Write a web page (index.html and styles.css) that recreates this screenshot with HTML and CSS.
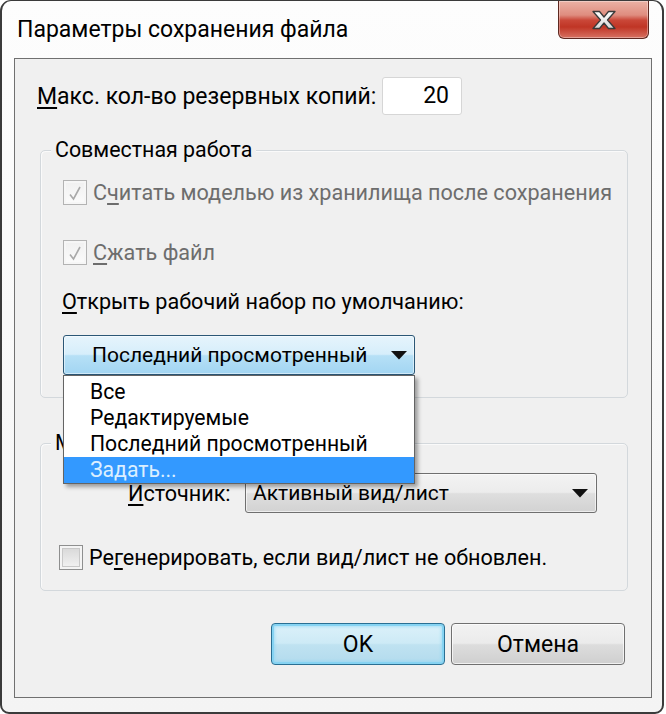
FILE: index.html
```html
<!DOCTYPE html>
<html lang="ru">
<head>
<meta charset="utf-8">
<title>Параметры сохранения файла</title>
<link rel="stylesheet" href="styles.css">
</head>
<body>
<div class="window">
  <div class="titlebar">
    <span class="title">Параметры сохранения файла</span>
    <div class="close">
      <svg width="26" height="20" viewBox="0 0 26 20">
        <defs>
          <linearGradient id="xg" x1="0" y1="0" x2="0" y2="1">
            <stop offset="0" stop-color="#ffffff"/>
            <stop offset="1" stop-color="#d8d8d8"/>
          </linearGradient>
        </defs>
        <polygon points="2,1.5 8.5,1.5 13,7 17.5,1.5 24,1.5 16.5,10 24,18.5 17.5,18.5 13,13 8.5,18.5 2,18.5 9.5,10" fill="url(#xg)" stroke="#3a3a3a" stroke-width="1.3" stroke-linejoin="round"/>
      </svg>
    </div>
  </div>
  <div class="client">
    <div class="row-backups">
      <span class="backups-label"><u>М</u>акс. кол-во резервных копий:</span>
      <div class="textbox">20</div>
    </div>

    <div class="group group-collab">
      <div class="legend">Совместная работа</div>
      <div class="check disabled cb-first">
        <span class="box">
          <svg width="14" height="16" viewBox="0 0 14 16"><path d="M2 9.5 L5.5 14 L12 2" fill="none" stroke="#a9a9a9" stroke-width="1.6"/></svg>
        </span>
        <span class="check-text">С<u>ч</u>итать моделью из хранилища после сохранения</span>
      </div>
      <div class="check disabled cb-second">
        <span class="box">
          <svg width="14" height="16" viewBox="0 0 14 16"><path d="M2 9.5 L5.5 14 L12 2" fill="none" stroke="#a9a9a9" stroke-width="1.6"/></svg>
        </span>
        <span class="check-text"><u>С</u>жать файл</span>
      </div>
      <div class="open-label"><u>О</u>ткрыть рабочий набор по умолчанию:</div>
      <div class="combo-wrap">
        <div class="combo combo-open">
          <span>Последний просмотренный</span>
          <svg class="arrow" width="18" height="10" viewBox="0 0 18 10"><polygon points="1,1 17,1 9,9.5" fill="#111"/></svg>
        </div>
        <ul class="dropdown">
          <li>Все</li>
          <li>Редактируемые</li>
          <li>Последний просмотренный</li>
          <li class="selected">Задать...</li>
        </ul>
      </div>
    </div>

    <div class="group group-thumb">
      <div class="legend">Миниатюра</div>
      <div class="source-row">
        <span class="source-label"><u>И</u>сточник:</span>
        <div class="combo combo-gray">
          <span>Активный вид/лист</span>
          <svg class="arrow" width="18" height="10" viewBox="0 0 18 10"><polygon points="1,1 17,1 9,9.5" fill="#111"/></svg>
        </div>
      </div>
      <div class="check cb-third">
        <span class="box box-empty"></span>
        <span class="check-text">Ре<u>г</u>енерировать, если вид/лист не обновлен.</span>
      </div>
    </div>

    <div class="buttons">
      <button class="btn btn-default">OK</button>
      <button class="btn">Отмена</button>
    </div>
  </div>
</div>
</body>
</html>
```

FILE: styles.css
```css
* { box-sizing: border-box; }

html, body {
  margin: 0;
  padding: 0;
  background: #ffffff;
}

body {
  font-family: Roboto, "Noto Sans", sans-serif;
  font-size: 23px;
  color: #000;
}

u { text-decoration-thickness: 2px; text-underline-offset: 3px; }

.window {
  width: 664px;
  height: 714px;
  border: 2px solid #3b3b3b;
  border-top-width: 1px;
  border-radius: 11px 11px 9px 9px;
  background: linear-gradient(#fdfdfd, #f4f4f4);
  padding: 0 10px 14px 12px;
  display: flex;
  flex-direction: column;
}

.titlebar {
  height: 57px;
  display: flex;
  align-items: flex-start;
  flex: none;
}

.title {
  margin-top: 14px;
  padding-left: 3px;
  line-height: 30px;
  font-size: 23px;
}

.close {
  margin-left: auto;
  margin-right: 3px;
  width: 91px;
  height: 38px;
  border: 1px solid #5e2820;
  border-top: none;
  border-radius: 0 0 6px 6px;
  background: linear-gradient(#ebb2a5 0%, #df8d7f 38%, #ca4738 52%, #c03525 70%, #d77262 100%);
  box-shadow: inset 0 0 0 1px rgba(255,255,255,0.35);
  display: flex;
  align-items: center;
  justify-content: center;
}

.client {
  flex: 1;
  border: 1px solid #707070;
  background: #f0f0f0;
  display: flex;
  flex-direction: column;
}

.row-backups {
  margin-top: 18px;
  height: 38px;
  padding-left: 22px;
  display: flex;
  align-items: center;
}

.backups-label {
  width: 345px;
  flex: none;
  white-space: nowrap;
}

.textbox {
  width: 80px;
  height: 38px;
  background: #fff;
  border: 1px solid #d6d6d6;
  border-radius: 3px;
  text-align: right;
  padding-right: 12px;
  line-height: 36px;
}

.group {
  margin: 35px 23px 0 25px;
  border: 1px solid #d3d8dc;
  border-radius: 5px;
  box-shadow: inset 1px 1px 0 #fafafa;
  display: flex;
  flex-direction: column;
  align-items: flex-start;
  font-size: 21.6px;
}

.group-collab { padding-bottom: 22px; }
.group-thumb { margin-top: 45px; padding-bottom: 20px; }

.legend {
  margin-top: -16px;
  margin-left: 10px;
  height: 30px;
  line-height: 30px;
  padding: 0 4px;
  background: #f0f0f0;
  white-space: nowrap;
  font-size: 21.4px;
}

.check {
  display: flex;
  align-items: center;
  height: 25px;
  white-space: nowrap;
}

.cb-first { margin-top: 15px; margin-left: 22px; }
.cb-second { margin-top: 35px; margin-left: 22px; }
.cb-third { margin-top: 32px; margin-left: 18px; }

.box {
  width: 24px;
  height: 25px;
  flex: none;
  border: 1px solid #b3b3b3;
  background: linear-gradient(#f0f0f0, #fbfbfb);
  box-shadow: inset 0 0 0 2px #f6f6f6;
  display: flex;
  align-items: center;
  justify-content: center;
}

.box-empty {
  border-color: #8e8f8f;
  background: linear-gradient(#d6d6d6, #f4f4f4);
  box-shadow: inset 0 0 0 2px #f4f4f4, inset 0 0 0 3px #c8c8c8;
}

.check-text { margin-left: 6px; line-height: 30px; }
.disabled .check-text { color: #6d6d6d; }

.open-label {
  margin-top: 22px;
  margin-left: 21px;
  line-height: 30px;
  white-space: nowrap;
}

.combo-wrap {
  position: relative;
  margin-top: 18px;
  margin-left: 22px;
  width: 352px;
  height: 40px;
}

.combo {
  width: 352px;
  height: 40px;
  border-radius: 3px;
  display: flex;
  align-items: center;
  white-space: nowrap;
  font-size: 21px;
}

.combo .arrow { margin-left: auto; flex: none; }

.combo-open {
  border: 1px solid #2b5776;
  background: linear-gradient(#e6f4fc 0%, #d6eefb 48%, #b6e0f6 52%, #a2d5f2 100%);
  box-shadow: inset 0 0 0 1px rgba(255,255,255,0.5);
  padding-left: 28px;
  padding-right: 6px;
}

.combo-gray {
  border: 1px solid #6f6f6f;
  background: linear-gradient(#f3f3f3 0%, #ececec 48%, #dedede 52%, #d2d2d2 100%);
  box-shadow: inset 0 0 0 1px rgba(255,255,255,0.6);
  padding-left: 7px;
  padding-right: 7px;
}

.dropdown {
  position: absolute;
  top: 40px;
  left: 0;
  width: 352px;
  margin: 0;
  padding: 3px 0 0;
  list-style: none;
  background: #fff;
  border: 1px solid #646464;
  box-shadow: 3px 3px 4px rgba(0,0,0,0.35);
  z-index: 5;
  font-size: 21.2px;
}

.dropdown li {
  height: 26px;
  line-height: 26px;
  padding-left: 26px;
  white-space: nowrap;
}

.dropdown li.selected {
  background: #3399ff;
  color: #dcefff;
}

.source-row {
  margin-top: 15px;
  margin-left: 87px;
  display: flex;
  align-items: center;
}

.source-label {
  width: 117px;
  flex: none;
  white-space: nowrap;
}

.buttons {
  margin-top: 32px;
  padding-right: 26px;
  display: flex;
  justify-content: flex-end;
  gap: 6px;
}

.btn {
  width: 174px;
  height: 42px;
  font-family: inherit;
  font-size: 23px;
  color: #000;
  border: 1px solid #707070;
  border-radius: 4px;
  background: linear-gradient(#f2f2f2 0%, #ebebeb 48%, #dddddd 52%, #cfcfcf 100%);
  box-shadow: inset 0 0 0 1px rgba(255,255,255,0.7);
  padding: 0;
}

.btn-default {
  border-color: #2a6f93;
  background: linear-gradient(#dcf1fa 0%, #cdeaf6 48%, #bfe2f1 52%, #b3dbed 100%);
  box-shadow: inset 0 0 0 2px #86d3f2, inset 0 0 3px 3px rgba(140,215,245,0.6);
}
```
